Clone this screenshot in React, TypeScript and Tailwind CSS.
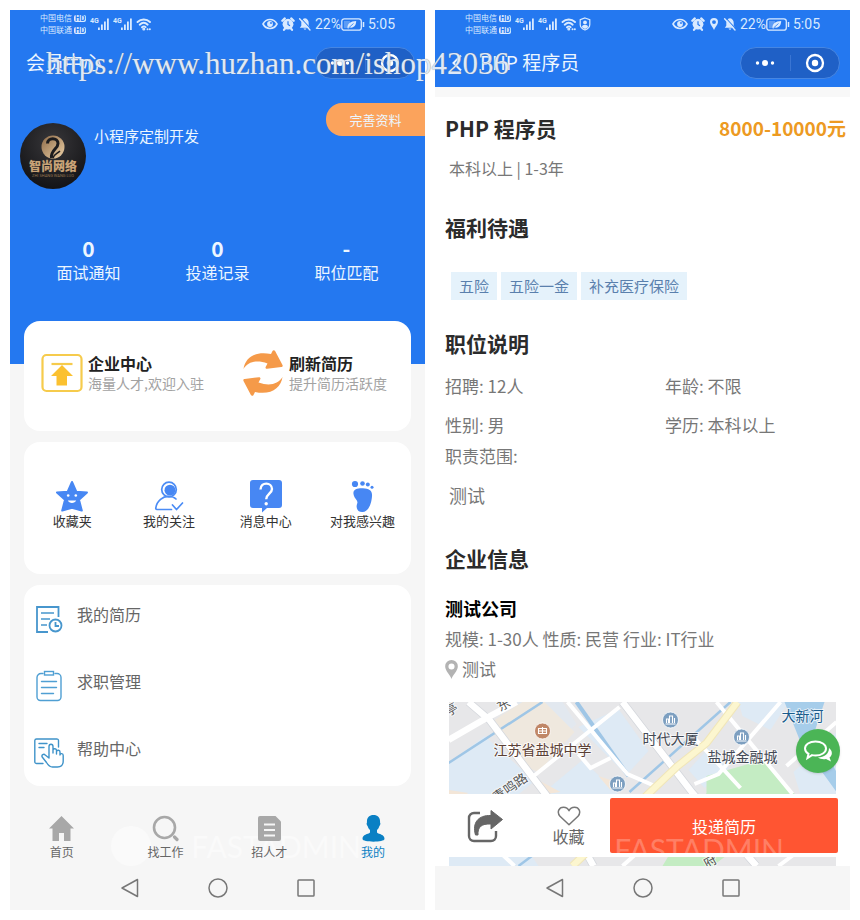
import React from "react";

type IconProps = { className?: string };

/* ---------- status bar icons ---------- */

const SignalIcon = () => (
  <svg viewBox="0 0 21 14" className="h-3.5 w-[21px]" fill="#d9eaff">
    <text x="0" y="6" fontSize="7" fontWeight="700" fontFamily="Roboto, sans-serif">4G</text>
    <rect x="8" y="10.500" width="1.800" height="2.500" />
    <rect x="11" y="7.500" width="1.800" height="5.500" />
    <rect x="14" y="4.500" width="1.800" height="8.500" />
    <rect x="17" y="1.500" width="1.800" height="11.500" />
  </svg>
);

const WifiIcon = () => (
  <svg viewBox="0 0 16 14" className="h-3.5 w-4" fill="none" stroke="#d9eaff" strokeWidth="1.9" strokeLinecap="round">
    <path d="M1.500 5C5 1.600 10.500 1.600 14 5M3.700 7.700c2.400-2.300 5.600-2.300 8 0M6 10.300c1.200-1.100 2.600-1.100 3.600-.2" />
    <circle cx="7.800" cy="12" r=".6" fill="#d9eaff" />
    <path d="M11.500 12.200h.1M13.800 12.200h.1" />
  </svg>
);

const ShieldUserIcon = () => (
  <svg viewBox="0 0 12 14" className="h-3.5 w-3" fill="none" stroke="#d9eaff" strokeWidth="1.200">
    <path d="M6 1l4.800 1.700v4.800c0 2.600-2 4.500-4.800 5.500-2.800-1-4.800-2.900-4.800-5.500V2.700z" />
    <circle cx="6" cy="5.400" r="1.900" fill="#d9eaff" stroke="none" />
    <path d="M2.900 10.200c.4-3.200 5.800-3.200 6.200 0L6 12z" fill="#d9eaff" stroke="none" />
  </svg>
);

const EyeIcon = () => (
  <svg viewBox="0 0 16 12" className="h-3 w-4" fill="none" stroke="#d9eaff" strokeWidth="1.600">
    <path d="M1 6c3.200-6 10.800-6 14 0-3.200 6-10.800 6-14 0z" />
    <circle cx="8" cy="6" r="2.900" fill="#d9eaff" stroke="none" />
    <circle cx="9" cy="5" r=".9" fill="#2478f0" stroke="none" />
  </svg>
);

const AlarmIcon = () => (
  <svg viewBox="0 0 14 14" className="size-3.5">
    <path d="M1.300 3.800L3.800 1.400M12.700 3.800L10.200 1.400M3 12.800l1.200-1.400M11 12.800l-1.200-1.400" stroke="#d9eaff" strokeWidth="2.200" strokeLinecap="round" />
    <circle cx="7" cy="7.200" r="5.400" fill="#d9eaff" />
    <path d="M7 4.300v3.200l2 1.300" stroke="#2478f0" strokeWidth="1.200" fill="none" />
  </svg>
);

const BellOffIcon = () => (
  <svg viewBox="0 0 14 14" className="size-3.5">
    <path d="M7 1.200c-2.600.5-3.700 2.400-3.700 4.800v2.800L1.800 10.800h10.400l-1.500-2V6c0-2.400-1.100-4.300-3.700-4.800z" fill="#d9eaff" />
    <path d="M5.400 11.500h3.200L7 13z" fill="#d9eaff" />
    <path d="M2.800 1L13 12" stroke="#2478f0" strokeWidth="1.100" />
    <path d="M1.600 1.700L12 13" stroke="#d9eaff" strokeWidth="1.400" strokeLinecap="round" />
  </svg>
);

const PlaceIcon = ({ className }: IconProps) => (
  <svg viewBox="0 0 12 18" className={className} fill="currentColor" fillRule="evenodd">
    <path d="M6 0a6 6 0 00-6 6c0 4.300 4.600 8 6 12 1.400-4 6-7.700 6-12a6 6 0 00-6-6zm0 3.200a2.900 2.900 0 110 5.800 2.900 2.900 0 010-5.800z" />
  </svg>
);

const BatteryIcon = () => (
  <svg viewBox="0 0 24 13" className="h-[13px] w-6">
    <rect x=".8" y=".8" width="19.500" height="11.400" rx="2.500" fill="none" stroke="#d9eaff" strokeWidth="1.300" />
    <rect x="3" y="3" width="6" height="7" fill="#5d9cf5" />
    <path d="M22.500 4v5" stroke="#d9eaff" strokeWidth="1.500" />
    <path d="M6.500 10.300c-.3-4.500 2.800-7 8.700-7.200-.2 4.700-2.300 7.200-6.600 6.400l-1 1z" fill="#d9eaff" />
    <path d="M7.500 10l5-4.500" stroke="#2478f0" strokeWidth=".8" />
  </svg>
);

const StatusBar = ({ located }: { located?: boolean }) => (
  <div className="flex h-7 items-center justify-between px-[30px] text-[#d9eaff]">
    <div className="flex items-center">
      <div className="mr-1 text-[8px] leading-3">
        {["中国电信", "中国联通"].map((name) => (
          <div key={name} className="flex items-center gap-0.5">
            {name}
            <span className="rounded-xs bg-[#d9eaff] px-px text-[7px] leading-[7px] font-bold text-[#2478f0]">HD</span>
          </div>
        ))}
      </div>
      <div className="flex items-center gap-0.5">
        <SignalIcon />
        <SignalIcon />
        <WifiIcon />
        {located && <ShieldUserIcon />}
      </div>
    </div>
    <div className="flex items-center gap-[3px] text-sm">
      <EyeIcon />
      <AlarmIcon />
      {located && <PlaceIcon className="mx-px h-3 w-2.5" />}
      <BellOffIcon />
      <div className="flex items-center">
        <span className="font-[Roboto]">22%</span>
        <BatteryIcon />
      </div>
      <span className="font-[Roboto]">5:05</span>
    </div>
  </div>
);

const Capsule = () => (
  <div className="flex h-8 w-[100px] items-center rounded-full border border-[#4686e2] bg-[#1f60c6]">
    <button type="button" aria-label="更多" className="flex flex-1 justify-center border-r border-[#3a75d3] py-1">
      <svg viewBox="0 0 20 8" className="h-2 w-5" fill="#fff">
        <circle cx="2.500" cy="4" r="1.700" />
        <circle cx="10" cy="4" r="3" />
        <circle cx="17.500" cy="4" r="1.700" />
      </svg>
    </button>
    <button type="button" aria-label="关闭" className="flex flex-1 justify-center">
      <svg viewBox="0 0 20 20" className="size-5">
        <circle cx="10" cy="10" r="8" fill="none" stroke="#fff" strokeWidth="2.300" />
        <circle cx="10" cy="10" r="3.200" fill="#fff" />
      </svg>
    </button>
  </div>
);

const AndroidNav = () => (
  <div className="flex h-11 items-center justify-center gap-16 bg-[#f6f6f6]">
    <button type="button" aria-label="返回">
      <svg viewBox="0 0 24 24" className="size-6" fill="none" stroke="#777" strokeWidth="1.500" strokeLinejoin="round">
        <path d="M19.500 3.500v17L4 12z" />
      </svg>
    </button>
    <button type="button" aria-label="主屏幕">
      <svg viewBox="0 0 24 24" className="size-6" fill="none" stroke="#777" strokeWidth="1.500">
        <circle cx="12" cy="12" r="9" />
      </svg>
    </button>
    <button type="button" aria-label="最近任务">
      <svg viewBox="0 0 24 24" className="size-6" fill="none" stroke="#777" strokeWidth="1.500">
        <rect x="4" y="4" width="16" height="16" rx=".8" />
      </svg>
    </button>
  </div>
);

/* ---------- member centre ---------- */

const Avatar = () => (
  <svg viewBox="0 0 66 66" className="size-[66px] shrink-0" role="img" aria-label="智尚网络">
    <defs>
      <linearGradient id="gold" x1="0" y1="0" x2="1" y2="1">
        <stop offset="0" stopColor="#8d6a48" />
        <stop offset="1" stopColor="#ecd0a6" />
      </linearGradient>
      <radialGradient id="dark" cx=".5" cy=".3" r=".7">
        <stop offset="0" stopColor="#38373a" />
        <stop offset="1" stopColor="#131316" />
      </radialGradient>
    </defs>
    <circle cx="33" cy="33" r="33" fill="url(#dark)" />
    <circle cx="33" cy="24" r="11.500" fill="url(#gold)" />
    <path d="M27.500 20.500c0-6.500 10.500-6.500 10.500 0 0 5.500-7.500 6.500-6.500 14.500" fill="none" stroke="#1d1c1e" strokeWidth="3" />
    <path d="M33 35c1-4 4-4 7-7" fill="none" stroke="#1d1c1e" strokeWidth="1.500" />
    <text x="33" y="48" textAnchor="middle" fontSize="12" fontWeight="900" fill="#c9a377" fontFamily="Noto Sans CJK SC, sans-serif">智尚网络</text>
    <text x="33" y="54" textAnchor="middle" fontSize="4" fill="#96764f" fontFamily="Roboto, sans-serif">ZHI SHANG WANG LUO</text>
  </svg>
);

const UploadIcon = () => (
  <svg viewBox="0 0 42 40" className="h-10 w-[42px] shrink-0" fill="none" stroke="#f6cb4c" strokeWidth="2.200">
    <rect x="1.500" y="2" width="39" height="36" rx="4" />
    <path d="M10.500 11h21" />
    <path d="M21 12l11 11h-6v9.500H15.500V23H10z" fill="#fbc130" stroke="none" />
  </svg>
);

const RefreshIcon = () => (
  <svg viewBox="0 0 42 46" className="h-[46px] w-[42px] shrink-0" fill="#f59a49">
    <path id="swoosh" d="M1.500 19C3 8 13 .5 29 4l1.500-3c.6-1.200 2.100-1 2.600 0l7.400 14c.5 1-.1 2-1.200 2l-14.200 1.800c-1.500.1-2-1.300-1.200-2.400l1.600-3C14 9.500 6 12 1.500 19z" />
    <use href="#swoosh" transform="rotate(180 21 23)" />
  </svg>
);

const StarFaceIcon = () => (
  <svg viewBox="0 0 34 34" className="size-[34px]">
    <path d="M17 3l4.300 9.700 10.700.8-8 7.300 2.800 10.800L17 28.700l-9.800 2.900L10 20.800l-8-7.300 10.700-.8z" fill="#4787f3" stroke="#4787f3" strokeWidth="2" strokeLinejoin="round" />
    <circle cx="13.200" cy="16.500" r="1.300" fill="#fff" />
    <circle cx="20.800" cy="16.500" r="1.300" fill="#fff" />
    <path d="M12.800 21.500h8.400c-1.200 3.200-7.200 3.200-8.400 0z" fill="#fff" />
  </svg>
);

const FollowIcon = () => (
  <svg viewBox="0 0 34 34" className="size-[34px]" fill="none" stroke="#4b8cf5" strokeWidth="1.700" strokeLinecap="round" strokeLinejoin="round">
    <circle cx="17" cy="10.500" r="7.300" />
    <circle cx="18" cy="11.200" r="5.500" fill="#4787f3" stroke="none" />
    <path d="M19.500 30.500H5c-1 0-1.300-.6-1.200-1.500C4.800 22 11 17 17 17.500c3 0 5.500 1 7 2.500" />
    <path d="M20.500 26l4 4.500 6-6.500" />
  </svg>
);

const QuestionIcon = () => (
  <svg viewBox="0 0 34 34" className="size-[34px]">
    <path d="M4 1h26a3 3 0 013 3v22a3 3 0 01-3 3H18l-5 4.500V29H4a3 3 0 01-3-3V4a3 3 0 013-3z" fill="#4787f3" />
    <path d="M11.500 10.500c.3-8.300 11.500-7.300 11.500-.5 0 4.500-5.800 5-5.800 10.300" fill="none" stroke="#fff" strokeWidth="2.400" />
    <circle cx="17.200" cy="24.800" r="1.700" fill="#fff" />
  </svg>
);

const FootIcon = () => (
  <svg viewBox="0 0 34 34" className="size-[34px]" fill="#4787f3">
    <circle cx="9" cy="5" r="3.100" />
    <circle cx="16.500" cy="4.500" r="2.300" />
    <circle cx="21.800" cy="5.500" r="2" />
    <circle cx="26" cy="8.300" r="1.500" />
    <path d="M7.500 15c-.8-4.500 4-6 9.500-5.700 6 .2 9.500 2.200 9 8-.4 6-2.800 15.500-9.500 15.700-5 .2-7-4-5.300-8.500 1.300-3.300-3-4.500-3.700-9.500z" />
  </svg>
);

const ResumeIcon = () => (
  <svg viewBox="0 0 30 30" className="size-[30px]" fill="none" stroke="#4796cd" strokeWidth="1.800">
    <path d="M24.500 13V3H3v25h11" />
    <path d="M7 9h13M7 15h9M7 21h6" strokeWidth="1.500" />
    <circle cx="21.500" cy="21.500" r="6" />
    <path d="M21.500 18v4h3.500" />
  </svg>
);

const ClipboardIcon = () => (
  <svg viewBox="0 0 30 32" className="h-8 w-[30px]" fill="none" stroke="#4f9fd3" strokeWidth="1.400" strokeLinecap="round">
    <path d="M9 3.500H7a4 4 0 00-4 4V27a3.500 3.500 0 003.500 3.500h17A3.500 3.500 0 0027 27V7.500a4 4 0 00-4-4h-2" />
    <rect x="10.500" y="1.500" width="9" height="3.500" />
    <path d="M7.500 11.500h15M7.500 17.500h15M7.500 23.500h12" />
  </svg>
);

const TouchIcon = () => (
  <svg viewBox="0 0 30 30" className="size-[30px]" fill="none" stroke="#3f93c9" strokeWidth="1.400" strokeLinecap="round" strokeLinejoin="round">
    <path d="M9 25.500H2.500A1.700 1.700 0 01.8 24V2.500A1.700 1.700 0 012.500 1h20A1.700 1.700 0 0124.500 2.500V9M5 5.500h8M5 9.500h5" />
    <path d="M15 20V8.500c0-3 4-3 4 0V15v-3c.5-2 3.500-1.500 3.500.5V16v-2.500c.5-2 3.500-1.500 3.500.5v3c.3-2 3.200-1.700 3.200.5v5.500c0 4-2.200 6-5.700 6h-5c-3 0-4.500-2-6-4.500l-4.300-5.500c-1-2 1.500-3.500 3-2z" />
  </svg>
);

const HomeIcon = () => (
  <svg viewBox="0 0 27 27" className="size-[27px]" fill="#a8a8a8">
    <path d="M13.500 1L26 13.500h-3.500V26H16v-8h-5v8H4.500V13.500H1z" />
  </svg>
);

const FindIcon = () => (
  <svg viewBox="0 0 27 27" className="size-[27px]" fill="none" stroke="#a8a8a8">
    <circle cx="12.500" cy="12.500" r="10.500" strokeWidth="2.600" />
    <path d="M22.500 22l2.500 2.500" strokeWidth="3.200" strokeLinecap="round" />
  </svg>
);

const DocIcon = () => (
  <svg viewBox="0 0 27 27" className="size-[27px]" fill="#a8a8a8">
    <path d="M4 1h15.500L25 6.500V24a2 2 0 01-2 2H4a2 2 0 01-2-2V3a2 2 0 012-2z" />
    <path d="M8 9.500h11M8 15h11M8 20.500h11" stroke="#f6f6f6" strokeWidth="1.800" />
  </svg>
);

const PersonIcon = () => (
  <svg viewBox="0 0 27 27" className="size-[27px]" fill="#0a80c4">
    <path d="M13.500 0C9 0 6.500 3 7 7.500c-.8.500-.2 3.200.6 3.500.5 2 1.400 3 2.400 4v2.500C8 19.500 2.500 19 2.500 24c0 3.500 22 3.500 22 0 0-5-5.500-4.500-7.500-6.500V15c1-1 1.900-2 2.400-4 .8-.3 1.400-3 .6-3.500C20.500 3 18 0 13.500 0z" />
  </svg>
);

const stats = [
  { value: "0", label: "面试通知" },
  { value: "0", label: "投递记录" },
  { value: "-", label: "职位匹配" },
];

const shortcuts = [
  { icon: <StarFaceIcon />, label: "收藏夹" },
  { icon: <FollowIcon />, label: "我的关注" },
  { icon: <QuestionIcon />, label: "消息中心" },
  { icon: <FootIcon />, label: "对我感兴趣" },
];

const menus = [
  { icon: <ResumeIcon />, label: "我的简历" },
  { icon: <ClipboardIcon />, label: "求职管理" },
  { icon: <TouchIcon />, label: "帮助中心" },
];

const tabs = [
  { icon: <HomeIcon />, label: "首页" },
  { icon: <FindIcon />, label: "找工作" },
  { icon: <DocIcon />, label: "招人才" },
  { icon: <PersonIcon />, label: "我的", active: true },
];

const MemberCenter = () => (
  <section className="relative flex flex-col bg-[#f6f6f6]">
    <header className="bg-[#2478f0] pb-20 text-[#ecf6ff]">
      <StatusBar />
      <div className="flex h-[49px] items-center justify-between pr-2.5 pl-4">
        <h1 className="text-[19px]">会员中心</h1>
        <Capsule />
      </div>
      <div className="mt-4 flex items-start">
        <div className="mt-5 ml-2.5">
          <Avatar />
        </div>
        <div className="mt-[21px] ml-2 flex-1 text-[15px] leading-6">小程序定制开发</div>
        <button type="button" className="h-[33px] w-[99px] rounded-l-2xl bg-[#fba35c] text-[13px]">
          完善资料
        </button>
      </div>
      <div className="mt-[47px] grid grid-cols-3 px-3.5 text-center">
        {stats.map((s) => (
          <div key={s.label}>
            <div className="text-[21px] leading-6 font-bold">{s.value}</div>
            <div className="text-base leading-6">{s.label}</div>
          </div>
        ))}
      </div>
    </header>

    <div className="-mt-[43px] flex flex-col gap-[11px] px-3.5">
      <div className="grid h-[110px] grid-cols-2 items-center gap-x-8 rounded-2xl bg-white pb-1.5 pl-[17px]">
        <button type="button" className="flex items-center gap-[5px] text-left">
          <UploadIcon />
          <span className="flex flex-col whitespace-nowrap">
            <b className="text-base leading-5 text-[#222]">企业中心</b>
            <span className="text-sm leading-5 text-[#a2a2a2]">海量人才,欢迎入驻</span>
          </span>
        </button>
        <button type="button" className="flex items-center gap-[5px] text-left">
          <RefreshIcon />
          <span className="flex flex-col whitespace-nowrap">
            <b className="text-base leading-5 text-[#222]">刷新简历</b>
            <span className="text-sm leading-5 text-[#a2a2a2]">提升简历活跃度</span>
          </span>
        </button>
      </div>

      <div className="grid h-[132px] grid-cols-4 items-center rounded-2xl bg-white pb-2">
        {shortcuts.map((s) => (
          <button key={s.label} type="button" className="flex flex-col items-center text-[13px] leading-4 text-[#333]">
            {s.icon}
            {s.label}
          </button>
        ))}
      </div>

      <div className="rounded-2xl bg-white">
        {menus.map((m) => (
          <button key={m.label} type="button" className="flex h-[67px] w-full items-center gap-[13px] px-2.5 text-base text-[#666]">
            {m.icon}
            <span className="pb-2.5">{m.label}</span>
          </button>
        ))}
      </div>
    </div>

    {/* faint brand mark behind the tab bar */}
    <div className="pointer-events-none absolute right-16 bottom-11 flex items-center gap-10 text-[30px] leading-9 text-[#fafafa]">
      <span className="size-10 rounded-full bg-[#fafafa]" />
      <span className="font-[Lato]">FASTADMIN</span>
    </div>
    <nav className="relative mt-[29px] grid grid-cols-4 pb-1">
      {tabs.map((t) => (
        <a
          key={t.label}
          href="#"
          className={`flex flex-col items-center text-xs leading-5 ${t.active ? "text-[#0a80c4]" : "text-[#666]"}`}
        >
          {t.icon}
          {t.label}
        </a>
      ))}
    </nav>
    <AndroidNav />
  </section>
);

/* ---------- job detail ---------- */

const Building = ({ x, y }: { x: number; y: number }) => (
  <g>
    <circle cx={x} cy={y} r="8" fill="#7d9fc0" stroke="#fff" strokeWidth=".8" />
    <path
      d={`M${x - 5} ${y + 4}h10M${x - 4} ${y + 3}v-4h2v4M${x - 1} ${y + 3}v-7h3v7M${x + 4} ${y + 3}v-5`}
      stroke="#fff"
      strokeWidth="1.100"
      fill="none"
    />
  </g>
);

const CityMap = () => (
  <svg viewBox="0 0 388 164" preserveAspectRatio="xMidYMid slice" className="block h-[164px] w-full" role="img" aria-label="公司位置">
    <rect width="388" height="164" fill="#e7e7e9" />
    <g fill="#deeaf5">
      <path d="M0 62l36-28 50 45-24 20H0z" />
      <path d="M68 0h46l14 22-24 22z" opacity=".5" />
      <path d="M98 88l36-30 42 40H104z" />
      <path d="M130 25l40-18 30 42-22 24z" />
      <path d="M290 0h50l-18 28-28-14zM345 70l43-40v70l-35-4z" />
      <path d="M240 68l20-22 20 20-24 20z" />
      <path d="M0 120h60l30 44H0z" />
    </g>
    <path d="M46 18L74 0h22l30 30-36 40-10-4z" fill="#efe8de" />
    <path d="M0 88l20 3-20 9zM86 76l26 14-14 2zM150 74l18 6-6 8z" fill="#f3e6d8" />
    <path d="M258 74l56-16 38 40-88 66h-50l44-73z" fill="#c4ecc3" />
    <path d="M336 0h40l-10 30 22 40v20l-36-50z" fill="#a6cdea" />
    <g fill="none" stroke="#9fc6e6" strokeWidth="2.500">
      <path d="M0 61L94 0M70 164l40-30M181 90L282 0" />
      <path d="M128 0l52 74" strokeWidth="4" />
    </g>
    <g fill="none" stroke="#d4d7dc" strokeWidth="8">
      <path d="M20 0l21 18 43 57 42 55 19 34M174 0l50 65 20 26 64 73" />
    </g>
    <g fill="none" stroke="#fff" strokeWidth="6.500">
      <path d="M20 0l21 18 43 57 42 55 19 34M0 38l38-22L68 0M174 0l50 65 20 26 64 73" />
    </g>
    <g fill="none" stroke="#fff" strokeWidth="4">
      <path d="M119 0l60 72 32 14M84 75l87-70M268 0l76 92M332 0l-62 72-24 10M130 52l12 14 20-10M246 36l46 50" />
      <path d="M174 164l20-18M30 130l36 34M330 164l40-30M388 20l-50 44" />
    </g>
    <path d="M289 0l-31 41-30 24-104 99" fill="none" stroke="#f1e6b8" strokeWidth="8" />
    <path d="M289 0l-31 41-30 24-104 99" fill="none" stroke="#fcf6cf" strokeWidth="6" />
    <Building x={222} y={18} />
    <Building x={293} y={35} />
    <Building x={169} y={82} />
    <circle cx="94" cy="29" r="8" fill="#c08767" stroke="#fff" strokeWidth=".8" />
    <path d="M90 26.500h8v5h-8zM90 29h8M94 25v6" fill="none" stroke="#fff" strokeWidth="1.100" />
    <g
      fontSize="14"
      textAnchor="middle"
      stroke="#fff"
      strokeWidth="2"
      strokeOpacity=".7"
      paintOrder="stroke"
      fontFamily="Noto Sans CJK SC, sans-serif"
    >
      <text x="94" y="53" fill="#5b4035">江苏省盐城中学</text>
      <text x="222" y="42" fill="#444a55">时代大厦</text>
      <text x="294" y="60" fill="#444a55">盐城金融城</text>
      <text x="354" y="19" fill="#1b5c8c">大新河</text>
      <g fill="#555" fontSize="13">
        <text x="62" y="90" transform="rotate(-35 62 86)">青鸣路</text>
        <text x="56" y="7" transform="rotate(-30 56 4)">东</text>
        <text x="3" y="12" transform="rotate(-30 3 8)">亭</text>
        <text x="262" y="164" transform="rotate(-30 262 160)">府</text>
      </g>
    </g>
  </svg>
);

const ShareIcon = () => (
  <svg viewBox="0 0 36 34" className="h-[34px] w-9" fill="none">
    <path d="M13 4H7a5 5 0 00-5 5v18a5 5 0 005 5h17a5 5 0 005-5v-5" stroke="#666" strokeWidth="2.400" />
    <path d="M8.500 26C5 14 11 6 24 6.500V1.500L35.500 10.500 24 20v-5C14.500 14.500 10.500 18 11 26z" fill="#666" stroke="#666" strokeLinejoin="round" />
  </svg>
);

const HeartIcon = () => (
  <svg viewBox="0 0 24 20" className="h-5 w-6" fill="none" stroke="#777" strokeWidth="1.500" strokeLinejoin="round">
    <path d="M12 18.800L3 10.200C-.5 6 2 1.200 6.500 1.200c2.500 0 4.500 1.300 5.500 3.500 1-2.200 3-3.500 5.500-3.500C22 1.200 24.500 6 21 10.200z" />
  </svg>
);

const ChatIcon = () => (
  <svg viewBox="0 0 30 24" className="h-6 w-[30px]">
    <path d="M26 9c4 3 3.500 7.500.5 9.500l1.500 4-5-2.500c-3 .6-6 0-8-1.500 6 0 11-3.500 11-9.500z" fill="#fff" />
    <path d="M12.500 2.500c6 0 10.500 3 10.500 7s-4.500 7-10.500 7c-1.200 0-2.400-.1-3.500-.4L4.500 19l1-4.200C3.300 13.500 2 11.600 2 9.500c0-4 4.500-7 10.500-7z" fill="none" stroke="#fff" strokeWidth="2" />
  </svg>
);

const benefits = ["五险", "五险一金", "补充医疗保险"];

const JobDetail = () => (
  <section className="flex flex-col bg-white">
    <header className="bg-[#2478f0] text-[#ecf6ff]">
      <StatusBar located />
      <div className="flex h-[49px] items-center pr-2.5 pl-4">
        <button type="button" aria-label="返回">
          <svg viewBox="0 0 12 20" className="h-5 w-3" fill="none" stroke="#ecf6ff" strokeWidth="2">
            <path d="M10 2.500L2.500 10l7.500 7.500" />
          </svg>
        </button>
        <h1 className="ml-[17px] flex-1 text-[19px]">PHP 程序员</h1>
        <Capsule />
      </div>
    </header>
    <div className="h-2.5 bg-[#f8f8f8]" />

    <div className="pt-[15px] pl-2.5 text-[17px] leading-6 text-[#777]">
      <div className="flex items-center justify-between pr-1 leading-8 font-bold">
        <h2 className="text-[21px] text-[#2b2b2b]">PHP 程序员</h2>
        <span className="text-[19px] text-[#ed9a22]">8000-10000元</span>
      </div>
      <p className="mt-3 pl-1 text-base leading-6">本科以上 | 1-3年</p>

      <h2 className="mt-[31px] text-[21px] leading-8 font-bold text-[#2b2b2b]">福利待遇</h2>
      <ul className="mt-[29px] flex gap-1 pl-1.5">
        {benefits.map((b) => (
          <li key={b} className="h-7 bg-[#e5f2fb] px-2 text-[15px] leading-7 text-[#5a80ad]">
            {b}
          </li>
        ))}
      </ul>

      <h2 className="mt-[27px] text-[21px] leading-8 font-bold text-[#2b2b2b]">职位说明</h2>
      <div className="mt-[15px] grid grid-cols-[220px_1fr] gap-y-[15px]">
        <span>招聘: 12人</span>
        <span>年龄: 不限</span>
        <span>性别: 男</span>
        <span>学历: 本科以上</span>
      </div>
      <p className="mt-[7px]">职责范围:</p>
      <p className="mt-[15px] pl-1 text-lg leading-6">测试</p>

      <h2 className="mt-[35px] text-[21px] leading-8 font-bold text-[#2b2b2b]">企业信息</h2>
      <h3 className="mt-[22px] text-lg leading-6 font-bold text-black">测试公司</h3>
      <p className="mt-[7px]">规模: 1-30人 性质: 民营 行业: IT行业</p>
      <p className="mt-1.5 flex items-center gap-1">
        <PlaceIcon className="h-[19px] w-[13px] text-[#b3b3b3]" />
        测试
      </p>
    </div>

    <div className="relative mt-[21px]">
      <div className="px-3.5">
        <CityMap />
      </div>
      <button
        type="button"
        aria-label="在线咨询"
        className="absolute top-[27px] right-2.5 flex size-11 items-center justify-center rounded-full bg-[#4bb556] shadow"
      >
        <ChatIcon />
      </button>
      {/* action bar floats over the map */}
      <div className="absolute inset-x-0 bottom-[9px] flex h-[63px] items-center bg-white pr-3 pl-8 text-[#666]">
        <button type="button" aria-label="分享">
          <ShareIcon />
        </button>
        <button type="button" className="mr-4 ml-10 flex flex-1 flex-col items-center text-base leading-5">
          <HeartIcon />
          收藏
        </button>
        <button type="button" className="relative h-[55px] w-[228px] overflow-hidden rounded-xs bg-[#ff5532] text-base text-white">
          <span className="pointer-events-none absolute right-[54px] -bottom-3.5 font-[Lato] text-[30px] leading-9 text-white/25">
            FASTADMIN
          </span>
          <span className="relative">投递简历</span>
        </button>
      </div>
    </div>
    <AndroidNav />
  </section>
);

export default function App() {
  return (
    <main className="relative grid grid-cols-2 gap-2.5 overflow-hidden bg-white p-2.5 font-['Noto_Sans_CJK_SC',sans-serif]">
      <MemberCenter />
      <JobDetail />
      <div className="pointer-events-none absolute top-12 left-[46px] font-['Liberation_Serif',serif] text-[31px] leading-8 text-[#dfe9f8] [text-shadow:0_0_1px_#777]">
        https://www.huzhan.com/ishop42036
      </div>
    </main>
  );
}
